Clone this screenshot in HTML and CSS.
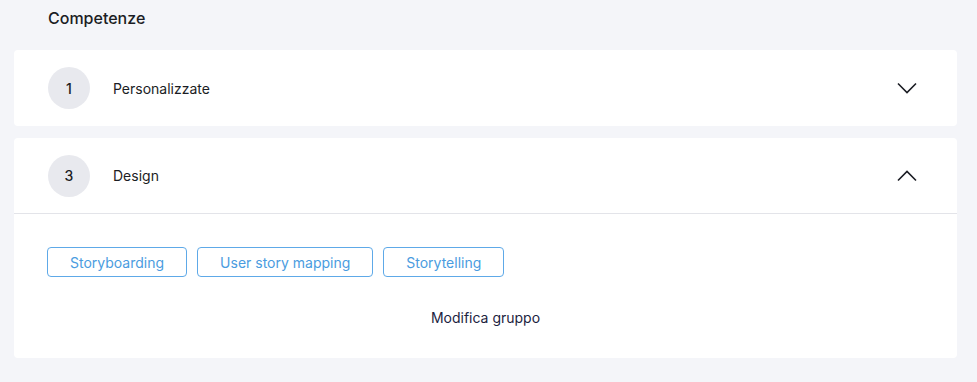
FILE: index.html
```html
<!DOCTYPE html>
<html lang="it">
<head>
<meta charset="utf-8">
<link rel="stylesheet" href="styles.css">
</head>
<body>
<h2 class="title">Competenze</h2>
<section class="card">
  <div class="card-head">
    <span class="badge">1</span>
    <span class="name">Personalizzate</span>
    <svg class="chev" width="20" height="12" viewBox="0 0 20 12"><path d="M1 1.5 L10 10.5 L19 1.5" fill="none" stroke="#1b1d24" stroke-width="1.6"/></svg>
  </div>
</section>
<section class="card">
  <div class="card-head open">
    <span class="badge">3</span>
    <span class="name">Design</span>
    <svg class="chev" width="20" height="12" viewBox="0 0 20 12"><path d="M1 10.5 L10 1.5 L19 10.5" fill="none" stroke="#1b1d24" stroke-width="1.6"/></svg>
  </div>
  <div class="card-body">
    <div class="tags">
      <span class="tag">Storyboarding</span>
      <span class="tag">User story mapping</span>
      <span class="tag">Storytelling</span>
    </div>
    <div class="edit">Modifica gruppo</div>
  </div>
</section>
</body>
</html>
```
FILE: styles.css
```css
html, body {
  margin: 0;
  background: #f4f5f9;
}
body {
  padding: 0 20px 0 14px;
  font-family: Inter, "Noto Sans", sans-serif;
  color: #1b1d24;
}
.title {
  margin: 0 0 22px;
  padding: 8px 0 0 34px;
  font-size: 16px;
  line-height: 20px;
  font-weight: 500;
}
.card {
  background: #fff;
  border-radius: 4px;
  margin-bottom: 12px;
}
.card-head {
  height: 76px;
  display: flex;
  align-items: center;
  padding: 0 40px 0 34px;
}
.card-head.open {
  height: 75px;
  border-bottom: 1px solid #e3e4e9;
}
.badge {
  width: 42px;
  height: 42px;
  border-radius: 50%;
  background: #e8e9ee;
  display: flex;
  align-items: center;
  justify-content: center;
  font-size: 14px;
  font-weight: 500;
}
.name {
  margin-left: 23px;
  font-size: 14px;
  flex: 1;
}
.card-body {
  padding: 33px 33px 30px;
}
.tags {
  display: flex;
  gap: 10px;
}
.tag {
  height: 30px;
  box-sizing: border-box;
  border: 1px solid #5ea9e8;
  border-radius: 4px;
  padding: 0 22px;
  display: flex;
  align-items: center;
  color: #4a9ce0;
  font-size: 14px;
}
.edit {
  margin-top: 31px;
  text-align: center;
  font-size: 14px;
  line-height: 20px;
  color: #1c2340;
}
```
